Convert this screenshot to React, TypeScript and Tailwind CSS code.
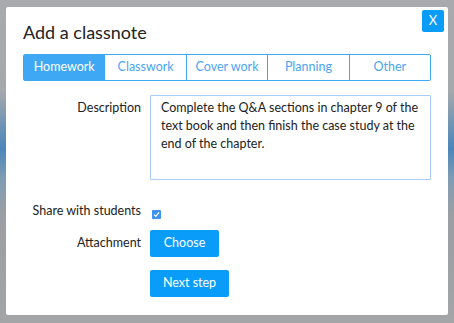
import { useState } from "react";

const tabs = ["Homework", "Classwork", "Cover work", "Planning", "Other"];

export default function App() {
  const [active, setActive] = useState("Homework");
  const [shared, setShared] = useState(true);

  return (
    <div className="w-[454px] h-[323px] bg-[linear-gradient(to_bottom,#a8aaad_0%,#a6a9ac_28%,#4b86b9_46%,#7f9cb5_55%,#9a9fa3_66%,#a3a5a7_100%)] pt-[7px] pl-[6px] font-['Lato',sans-serif]">
      <div className="relative w-[442px] h-[308px] bg-white rounded-[2px] px-[17px] pt-[12px]">
        <button className="absolute top-[3px] right-[4px] w-[22px] h-[22px] bg-[#0a9cf9] text-white text-[13px] rounded-[2px] flex items-center justify-center">
          X
        </button>

        <h1 className="text-[18px] text-[#222] leading-[26px] font-normal">Add a classnote</h1>

        <div className="mt-[9px] flex border border-[#3fa8f4] rounded-[2px] h-[27px]">
          {tabs.map((t, i) => (
            <button
              key={t}
              onClick={() => setActive(t)}
              className={
                "flex-1 text-[12.5px] " +
                (i > 0 ? "border-l border-[#3fa8f4] " : "") +
                (active === t ? "bg-[#3fa8f4] text-white" : "bg-white text-[#4ba5f2]")
              }
            >
              {t}
            </button>
          ))}
        </div>

        <div className="mt-[14px] flex flex-col text-[12.5px] text-[#222]">
          <div className="flex gap-[9px]">
            <label className="w-[118px] shrink-0 text-right pt-[4px]">Description</label>
            <div className="flex-1 h-[85px] border border-[#a9cdfb] rounded-[1px] px-[10px] pt-[3px] leading-[18px]">
              Complete the Q&amp;A sections in chapter 9 of the text book and then finish the case study at the end of the chapter.
            </div>
          </div>

          <div className="mt-[22px] flex gap-[9px] items-start">
            <label className="w-[118px] shrink-0 text-right leading-[18px]">Share with students</label>
            <div className="pt-[8px] pl-[2px]">
              <button
                onClick={() => setShared(!shared)}
                className="w-[9px] h-[9px] rounded-[1px] bg-[#3f93f0] flex items-center justify-center"
              >
                {shared && (
                  <svg width="7" height="7" viewBox="0 0 7 7">
                    <path d="M1 3.6 L2.8 5.3 L6 1.5" stroke="white" strokeWidth="1.2" fill="none" />
                  </svg>
                )}
              </button>
            </div>
          </div>

          <div className="mt-[10px] flex gap-[9px] items-center">
            <label className="w-[118px] shrink-0 text-right">Attachment</label>
            <button className="h-[27px] w-[69px] bg-[#0a9cf9] text-white rounded-[2px] text-[12.5px]">Choose</button>
          </div>

          <div className="mt-[13px] flex gap-[9px]">
            <div className="w-[118px] shrink-0" />
            <button className="h-[27px] w-[79px] bg-[#0a9cf9] text-white rounded-[2px] text-[12.5px]">Next step</button>
          </div>
        </div>
      </div>
    </div>
  );
}
